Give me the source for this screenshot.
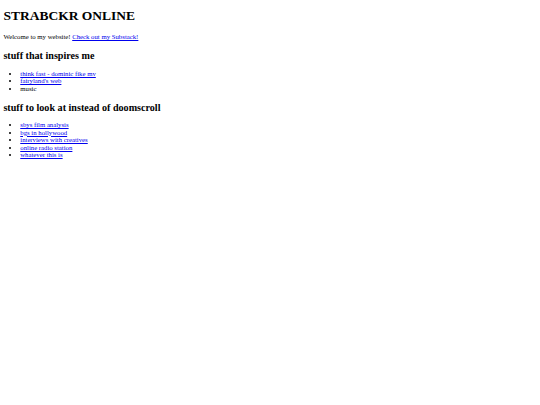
export default function App() {
  const inspires = [
    { label: "think fast - dominic fike mv", href: "#" },
    { label: "fairyland's web", href: "#" },
    { label: "music" },
  ];
  const instead = [
    "sbys film analysis",
    "bgs in hollywood",
    "interviews with creatives",
    "online radio station",
    "whatever this is",
  ];

  return (
    <div className="mx-[3.375px] text-black font-['Liberation_Serif','Times_New_Roman',serif] text-[6.75px] leading-[1.107]">
      <h1 className="text-[13.5px] font-bold my-[9.045px] leading-[1.107]">STRABCKR ONLINE</h1>
      <p className="my-[6.75px]">
        Welcome to my website!{" "}
        <a href="#" className="text-[#0000ee] underline decoration-[#0000ee]">
          Check out my Substack!
        </a>
      </p>

      <h2 className="text-[10.125px] font-bold mt-[9.6px] mb-[8.4px] leading-[1.107]">stuff that inspires me</h2>
      <ul className="list-disc pl-[16.875px] my-[6.75px]">
        {inspires.map((item) => (
          <li key={item.label}>
            {item.href ? (
              <a href={item.href} className="text-[#0000ee] underline decoration-[#0000ee]">
                {item.label}
              </a>
            ) : (
              item.label
            )}
          </li>
        ))}
      </ul>

      <h2 className="text-[10.125px] font-bold mt-[9.6px] mb-[8.4px] leading-[1.107]">stuff to look at instead of doomscroll</h2>
      <ul className="list-disc pl-[16.875px] my-[6.75px]">
        {instead.map((label) => (
          <li key={label}>
            <a href="#" className="text-[#0000ee] underline decoration-[#0000ee]">
              {label}
            </a>
          </li>
        ))}
      </ul>
    </div>
  );
}
